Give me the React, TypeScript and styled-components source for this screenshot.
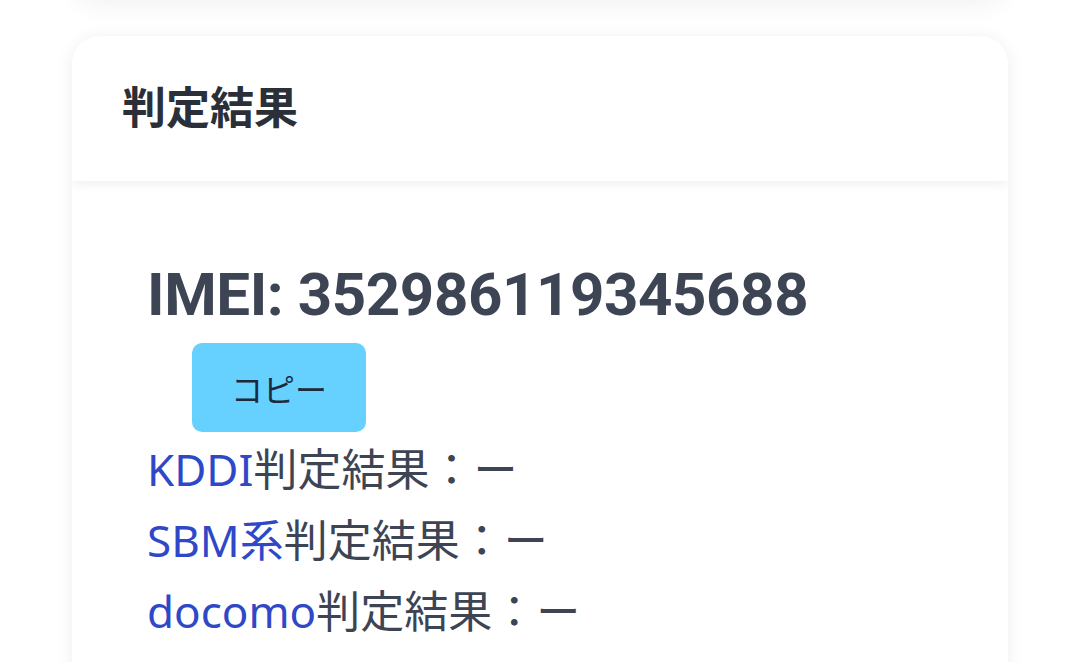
import React from 'react';
import styled, { createGlobalStyle } from 'styled-components';

const GlobalStyle = createGlobalStyle`
  html, body {
    margin: 0;
    padding: 0;
    background: #ffffff;
    font-family: "Noto Sans", "Noto Sans CJK JP", sans-serif;
    overflow: hidden;
  }
`;

const Page = styled.div`
  padding: 0 72px;
  display: flex;
  flex-direction: column;
  gap: 40px;
`;

const PrevCard = styled.div`
  height: 60px;
  margin-top: -64px;
  background: white;
  border-radius: 28px;
  box-shadow: 0 6px 28px rgba(0, 0, 0, 0.07);
`;

const Card = styled.div`
  background: white;
  border-radius: 28px;
  overflow: hidden;
  box-shadow: 0 2px 18px rgba(0, 0, 0, 0.07);
`;

const CardHeader = styled.div`
  height: 145px;
  box-sizing: border-box;
  display: flex;
  align-items: center;
  padding: 0 50px 8px;
  position: relative;
  box-shadow: 0 4px 10px rgba(0, 0, 0, 0.06);
  h2 {
    margin: 0;
    font-family: "Noto Sans CJK JP", sans-serif;
    font-weight: 700;
    font-size: 44px;
    color: #2b2f38;
    line-height: 1;
  }
`;

const CardBody = styled.div`
  padding: 84px 75px 40px;
`;

const Imei = styled.div`
  font-family: Roboto, "Noto Sans CJK JP", sans-serif;
  font-weight: 700;
  font-size: 60px;
  letter-spacing: -0.4px;
  line-height: 1;
  color: #3d4454;
`;

const CopyButton = styled.button`
  margin: 18px 0 2px 45px;
  width: 174px;
  height: 89px;
  border: none;
  border-radius: 10px;
  background: #66d0ff;
  color: #1b2a3c;
  font-family: "Noto Sans CJK JP", sans-serif;
  font-size: 32px;
  display: flex;
  align-items: center;
  justify-content: center;
  padding: 0;
`;

const ResultRow = styled.div`
  font-size: 44px;
  line-height: 71px;
  color: #3d4454;
  white-space: nowrap;
  span {
    color: #2f48c8;
  }
`;

const results = [
  { carrier: 'KDDI', value: 'ー' },
  { carrier: 'SBM系', value: 'ー' },
  { carrier: 'docomo', value: 'ー' },
];

export default function App() {
  return (
    <>
      <GlobalStyle />
      <Page>
        <PrevCard />
        <Card>
          <CardHeader>
            <h2>判定結果</h2>
          </CardHeader>
          <CardBody>
            <Imei>IMEI: 352986119345688</Imei>
            <CopyButton>コピー</CopyButton>
            {results.map(r => (
              <ResultRow key={r.carrier}>
                <span>{r.carrier}</span>判定結果：{r.value}
              </ResultRow>
            ))}
          </CardBody>
        </Card>
      </Page>
    </>
  );
}
